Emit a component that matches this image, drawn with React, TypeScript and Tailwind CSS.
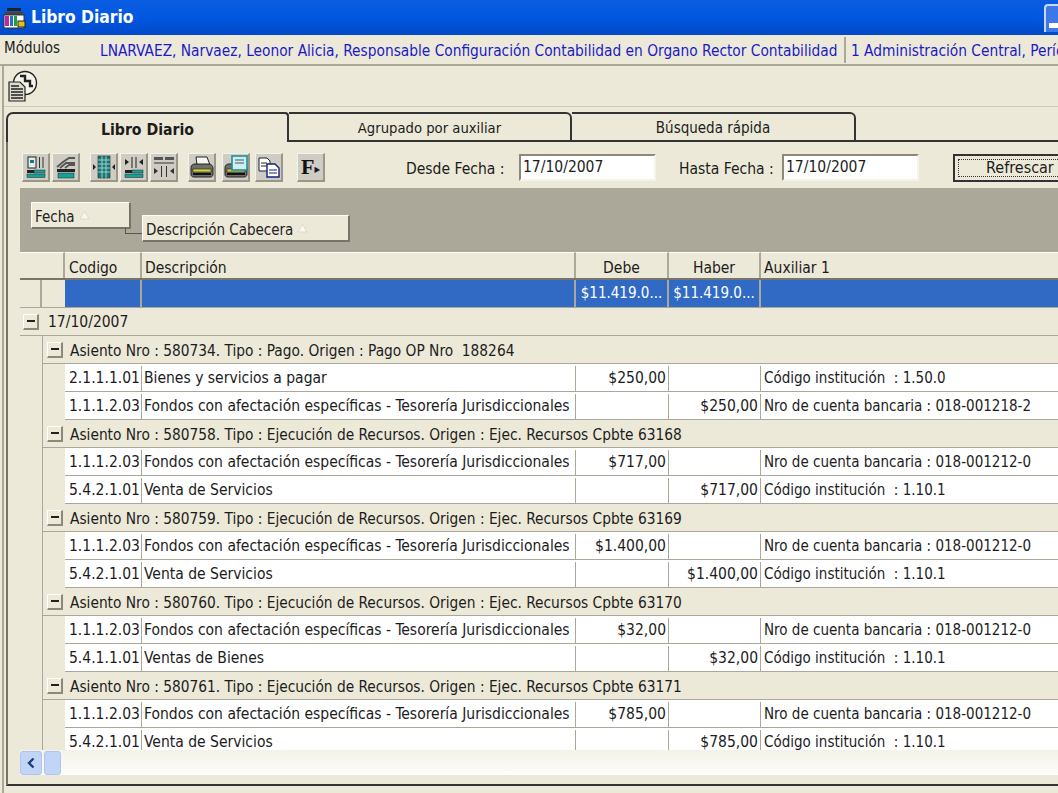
import { ReactNode } from 'react';

const FONT = { fontFamily: '"DejaVu Sans Condensed", "Liberation Sans", Arial, sans-serif' };

interface Row {
  code: string;
  desc: string;
  debe?: string;
  haber?: string;
  aux: string;
}

interface Asiento {
  title: string;
  rows: Row[];
}

const FONDOS = 'Fondos con afectación específicas - Tesorería Jurisdiccionales';
const CUENTA_0 = 'Nro de cuenta bancaria : 018-001212-0';
const INST_110 = 'Código institución  : 1.10.1';

const asientos: Asiento[] = [
  {
    title: 'Asiento Nro : 580734. Tipo : Pago. Origen : Pago OP Nro  188264',
    rows: [
      { code: '2.1.1.1.01', desc: 'Bienes y servicios a pagar', debe: '$250,00', aux: 'Código institución  : 1.50.0' },
      { code: '1.1.1.2.03', desc: FONDOS, haber: '$250,00', aux: 'Nro de cuenta bancaria : 018-001218-2' },
    ],
  },
  {
    title: 'Asiento Nro : 580758. Tipo : Ejecución de Recursos. Origen : Ejec. Recursos Cpbte 63168',
    rows: [
      { code: '1.1.1.2.03', desc: FONDOS, debe: '$717,00', aux: CUENTA_0 },
      { code: '5.4.2.1.01', desc: 'Venta de Servicios', haber: '$717,00', aux: INST_110 },
    ],
  },
  {
    title: 'Asiento Nro : 580759. Tipo : Ejecución de Recursos. Origen : Ejec. Recursos Cpbte 63169',
    rows: [
      { code: '1.1.1.2.03', desc: FONDOS, debe: '$1.400,00', aux: CUENTA_0 },
      { code: '5.4.2.1.01', desc: 'Venta de Servicios', haber: '$1.400,00', aux: INST_110 },
    ],
  },
  {
    title: 'Asiento Nro : 580760. Tipo : Ejecución de Recursos. Origen : Ejec. Recursos Cpbte 63170',
    rows: [
      { code: '1.1.1.2.03', desc: FONDOS, debe: '$32,00', aux: CUENTA_0 },
      { code: '5.4.1.1.01', desc: 'Ventas de Bienes', haber: '$32,00', aux: INST_110 },
    ],
  },
  {
    title: 'Asiento Nro : 580761. Tipo : Ejecución de Recursos. Origen : Ejec. Recursos Cpbte 63171',
    rows: [
      { code: '1.1.1.2.03', desc: FONDOS, debe: '$785,00', aux: CUENTA_0 },
      { code: '5.4.2.1.01', desc: 'Venta de Servicios', haber: '$785,00', aux: INST_110 },
    ],
  },
];

function ToolButton({ children, className = '' }: { children: ReactNode; className?: string }) {
  return (
    <div className={`w-[28px] h-[29px] shrink-0 flex items-center justify-center bg-[#cfccc4] border-t border-l border-t-[#f4f2ea] border-l-[#f4f2ea] border-r-2 border-b-2 border-r-[#9a9788] border-b-[#9a9788] ${className}`}>
      {children}
    </div>
  );
}

function Minus() {
  return (
    <div className="w-[16px] h-[16px] shrink-0 flex items-center justify-center bg-[#ece9d8] border-t border-l border-t-white border-l-white border-r-2 border-b-2 border-r-[#8c8979] border-b-[#8c8979]">
      <div className="w-[8px] h-[2px] bg-[#222]" />
    </div>
  );
}

function AppIcon() {
  return (
    <svg width="24" height="24" viewBox="0 0 24 24" className="shrink-0">
      <rect x="5" y="2" width="14" height="3" fill="#222" />
      <path d="M3 6h18v3H3z" fill="#444" />
      <rect x="2" y="9" width="20" height="13" fill="#fff" stroke="#333" />
      <rect x="3" y="10" width="4" height="10" fill="#c026a0" />
      <rect x="8" y="10" width="3" height="10" fill="#2070d0" />
      <rect x="12" y="10" width="3" height="10" fill="#20a040" />
      <rect x="16" y="15" width="7" height="6" fill="#e0c020" stroke="#222" />
    </svg>
  );
}

function ClockDocIcon() {
  return (
    <svg width="30" height="32" viewBox="0 0 30 32" fill="none" stroke="#222" className="shrink-0">
      <circle cx="17" cy="13" r="11.5" fill="#f6f4ea" strokeWidth="1.4" />
      <path d="M12 6h5v5h5v5h3" strokeWidth="2.4" />
      <path d="M1 12h11l5 5v14H1z" fill="#dedcd0" strokeWidth="1.2" />
      <path d="M3 16h8M3 19h12M3 22h12M3 25h12M3 28h12" strokeWidth="1.3" />
    </svg>
  );
}

function BarBase() {
  return (
    <>
      <rect x="1" y="14" width="7" height="3" fill="#222" />
      <rect x="8" y="14" width="11" height="3" fill="#18a098" stroke="#222" strokeWidth="0.5" />
      <rect x="1" y="18" width="18" height="3.5" fill="#18a098" stroke="#222" strokeWidth="0.5" />
    </>
  );
}

function IconDocBar() {
  return (
    <svg width="20" height="23" viewBox="0 0 20 23" className="shrink-0">
      <rect x="2" y="1" width="8" height="11" fill="#dfeee9" stroke="#222" />
      <rect x="4" y="4" width="4" height="3" fill="#18787c" />
      <path d="M13.5 1v11M17 1v11" stroke="#333" />
      <BarBase />
    </svg>
  );
}

function IconHatchBar() {
  return (
    <svg width="22" height="23" viewBox="0 0 22 23" className="shrink-0">
      <path d="M2 11l6-5 6-4h6M5 12l6-5h9M10 12l4-3h6" stroke="#555" strokeWidth="1.8" fill="none" />
      <rect x="2" y="13" width="18" height="3" fill="#222" />
      <rect x="3" y="17" width="16" height="5" fill="#18a098" stroke="#222" strokeWidth="0.5" />
    </svg>
  );
}

function IconGridArrows() {
  return (
    <svg width="24" height="24" viewBox="0 0 24 24" className="shrink-0">
      <rect x="6" y="1" width="12" height="22" fill="#167a78" stroke="#222" strokeWidth="0.6" />
      <path d="M6 5h12M6 9h12M6 13h12M6 17h12M10 1v22M14 1v22" stroke="#bfe0da" strokeWidth="0.8" />
      <path d="M1 9l3 3-3 3zM23 9l-3 3 3 3z" fill="#222" />
    </svg>
  );
}

function IconArrowsBar() {
  return (
    <svg width="20" height="23" viewBox="0 0 20 23" className="shrink-0">
      <path d="M8 1v11M12 1v11" stroke="#222" />
      <path d="M1 3l4 3-4 3zM19 3l-4 3 4 3z" fill="#222" />
      <BarBase />
    </svg>
  );
}

function IconColumns() {
  return (
    <svg width="22" height="22" viewBox="0 0 22 22" className="shrink-0">
      <rect x="1" y="1" width="9" height="3" fill="#555" />
      <rect x="12" y="1" width="9" height="3" fill="#555" />
      <path d="M1 7h20" stroke="#333" />
      <path d="M8.5 10v11M13.5 10v11" stroke="#333" />
      <path d="M1 12l4 3-4 3zM21 12l-4 3 4 3z" fill="#333" />
    </svg>
  );
}

function IconPrinter({ preview }: { preview?: boolean }) {
  return (
    <svg width="24" height="24" viewBox="0 0 24 24" className="shrink-0">
      {!preview && <path d="M6 2h11l3 8H7z" fill="#f4f4f0" stroke="#222" />}
      <path d="M1 13c0-3 2-4 4-4h14c2 0 4 2 4 4v6c0 2-1 3-3 3H4c-2 0-3-1-3-3z" fill="#6e6e6c" stroke="#222" />
      <rect x="3" y="14" width="18" height="3" fill="#d8d030" stroke="#222" strokeWidth="0.6" />
      <rect x="3" y="18" width="18" height="2" fill="#111" />
      {preview && (
        <>
          <rect x="8" y="1" width="15" height="14" fill="#cfeef0" stroke="#1c8fa0" strokeWidth="1.6" />
          <path d="M11 5h9M11 8h9" stroke="#456" />
        </>
      )}
    </svg>
  );
}

function IconCopy() {
  return (
    <svg width="24" height="24" viewBox="0 0 24 24" className="shrink-0">
      <path d="M2 3h8l3 3v10H2z" fill="#fff" stroke="#222" />
      <path d="M4 8h6M4 11h6" stroke="#222" />
      <path d="M10 9h8l4 4v9H10z" fill="#fff" stroke="#102080" strokeWidth="1.4" />
      <path d="M12 15h8M12 18h8" stroke="#102080" />
    </svg>
  );
}

function SortMark() {
  return (
    <svg width="11" height="10" viewBox="0 0 11 10" className="shrink-0 ml-[4px]" fill="#f8f6ee" stroke="#d6d3c4" strokeWidth="0.7">
      <path d="M5.5 1l4.5 8H1z" />
    </svg>
  );
}

function GroupChip({ label, className }: { label: string; className: string }) {
  return (
    <div className={`h-[27px] bg-[#ece9d8] border-t border-l border-t-white border-l-white border-r-2 border-b-2 border-r-[#77746a] border-b-[#77746a] flex items-center pl-[3px] text-[#222] whitespace-nowrap text-[15px] ${className}`}>
      <span className="mt-[4px]">{label}</span>
      <SortMark />
    </div>
  );
}

function HeaderCell({ label, width, left }: { label: string; width: string; left?: number }) {
  return (
    <div className={`${width} h-full shrink-0 flex items-center border-t border-t-white border-r-2 border-r-[#aca899] ${left === 4 ? 'pl-[4px]' : left === 3 ? 'pl-[3px]' : 'justify-center'}`}>
      <span className="mt-[6px]">{label}</span>
    </div>
  );
}

function DataRow({ row }: { row: Row }) {
  return (
    <div className="flex h-[28px] shrink-0 pt-[2px] bg-white border-b border-b-[#aca899]">
      <div className="w-[77px] shrink-0 pl-[4px] flex items-center border-r border-r-[#aca899]">{row.code}</div>
      <div className="w-[434px] shrink-0 pl-[2px] flex items-center border-r border-r-[#aca899] whitespace-nowrap overflow-hidden">{row.desc}</div>
      <div className="w-[93px] shrink-0 pr-[2px] flex items-center justify-end border-r border-r-[#aca899]">{row.debe}</div>
      <div className="w-[92px] shrink-0 pr-[2px] flex items-center justify-end border-r border-r-[#aca899]">{row.haber}</div>
      <div className="flex-1 pl-[3px] flex items-center whitespace-pre text-[15px]">{row.aux}</div>
    </div>
  );
}

export default function App() {
  return (
    <div className="w-[1058px] h-[793px] overflow-hidden flex flex-col bg-[#ece9d8] text-[15.5px] text-[#1c1c1c]" style={FONT}>
      {/* title bar */}
      <div className="h-[35px] shrink-0 flex items-center pl-[2px] gap-[5px] bg-gradient-to-b from-[#0a5ce0] via-[#0258e0] to-[#0048c8]">
        <AppIcon />
        <span className="text-white font-bold text-[17.3px]">Libro Diario</span>
        <div className="ml-auto w-[14px] h-[28px] bg-[#3c78e8] border-l-2 border-t-2 border-[#c8d8f8] rounded-tl-[4px] flex items-end">
          <div className="w-full h-[5px] mb-[4px] ml-[3px] bg-white" />
        </div>
      </div>

      {/* modules bar */}
      <div className="h-[31px] shrink-0 flex items-center whitespace-nowrap border-b-2 border-b-[#aca899] overflow-hidden">
        <span className="ml-[4px] w-[96px] shrink-0 -mt-[3px] text-[15px]">Módulos</span>
        <span className="text-[#1a1ac8] shrink-0 w-[744px] text-[15.3px] mt-[4px]">LNARVAEZ, Narvaez, Leonor Alicia, Responsable Configuración Contabilidad en Organo Rector Contabilidad</span>
        <div className="w-[2px] h-[26px] bg-[#aca899] shrink-0" />
        <span className="text-[#1a1ac8] ml-[5px] shrink-0 text-[15.3px] mt-[4px]">1 Administración Central, Período</span>
      </div>

      <div className="flex-1 min-h-0 flex flex-col ml-[2px] border-l-2 border-l-[#aca899]">
        {/* icon bar */}
        <div className="h-[41px] shrink-0 flex items-center pl-[4px] border-b border-b-[#cfccbc]">
          <ClockDocIcon />
        </div>

        {/* tabs */}
        <div className="flex-1 min-h-0 flex flex-col pl-[2px] pt-[5px] pb-[7px]">
          <div className="h-[30px] shrink-0 flex">
            <div className="w-[283px] h-[30px] -mb-px z-10 pt-[3px] flex items-center justify-center font-bold text-[15.7px] bg-[#ece9d8] border-l-2 border-t-2 border-r-2 border-[#333] rounded-tl-[7px] rounded-tr-[4px]">
              Libro Diario
            </div>
            <div className="w-[283px] h-[30px] pt-[3px] flex items-center justify-center text-[14.7px] border-t-2 border-r-2 border-b-2 border-[#333] rounded-tr-[6px]">
              Agrupado por auxiliar
            </div>
            <div className="w-[284px] h-[30px] pt-[3px] flex items-center justify-center text-[15px] border-t-2 border-r-2 border-b-2 border-[#333] rounded-tr-[6px]">
              Búsqueda rápida
            </div>
            <div className="flex-1 border-b-2 border-b-[#333]" />
          </div>

          <div className="flex-1 min-h-0 flex flex-col border-l-2 border-l-[#77746a] border-b-2 border-b-[#333] pl-[12px] pb-[9px]">
            {/* filter toolbar */}
            <div className="h-[46px] shrink-0 flex items-center pl-[2px] pt-[5px] whitespace-nowrap">
              <ToolButton><IconDocBar /></ToolButton>
              <ToolButton className="ml-[2px]"><IconHatchBar /></ToolButton>
              <ToolButton className="ml-[10px]"><IconGridArrows /></ToolButton>
              <ToolButton className="ml-[2px]"><IconArrowsBar /></ToolButton>
              <ToolButton className="ml-[2px]"><IconColumns /></ToolButton>
              <ToolButton className="ml-[10px]"><IconPrinter /></ToolButton>
              <ToolButton className="ml-[6px]"><IconPrinter preview /></ToolButton>
              <ToolButton className="ml-[5px]"><IconCopy /></ToolButton>
              <ToolButton className="ml-[14px]">
                <span className="text-[22px] font-bold text-[#111] leading-none" style={{ fontFamily: '"Liberation Serif", serif' }}>F</span>
                <span className="text-[8px] leading-none mt-[6px]">▶</span>
              </ToolButton>
              <span className="ml-[81px] w-[113px] shrink-0 mt-[5px]">Desde Fecha :</span>
              <div className="w-[137px] h-[27px] shrink-0 pl-[2px] flex items-center bg-white border-t-2 border-l-2 border-t-[#8c8979] border-l-[#8c8979] border-r-2 border-b-2 border-r-[#f6f4ea] border-b-[#f6f4ea]">17/10/2007</div>
              <span className="ml-[23px] w-[103px] shrink-0 mt-[5px]">Hasta Fecha :</span>
              <div className="w-[137px] h-[27px] shrink-0 pl-[2px] flex items-center bg-white border-t-2 border-l-2 border-t-[#8c8979] border-l-[#8c8979] border-r-2 border-b-2 border-r-[#f6f4ea] border-b-[#f6f4ea]">17/10/2007</div>
              <div className="ml-[34px] w-[120px] h-[28px] shrink-0 flex items-center border-2 border-[#333] p-[3px]">
                <div className="w-full h-full border border-dotted border-[#333] flex items-center pl-[27px] text-[16px]">Refrescar</div>
              </div>
            </div>

            {/* group-by band */}
            <div className="relative h-[64px] shrink-0 bg-[#aca899] pl-[11px] pt-[14px]">
              <GroupChip label="Fecha" className="w-[100px]" />
              <GroupChip label="Descripción Cabecera" className="w-[208px] ml-[111px] -mt-[14px]" />
              <div className="absolute left-[105px] top-[40px] w-[17px] h-[6px] border-l border-b border-[#555]" />
            </div>

            {/* grid */}
            <div className="flex-1 min-h-0 overflow-hidden">
              <div className="h-[28px] flex bg-[#ece9d8] border-b-2 border-b-[#77746a] whitespace-nowrap">
                <HeaderCell label="" width="w-[45px]" />
                <HeaderCell label="Codigo" width="w-[77px]" left={4} />
                <HeaderCell label="Descripción" width="w-[434px]" left={3} />
                <HeaderCell label="Debe" width="w-[93px]" />
                <HeaderCell label="Haber" width="w-[92px]" />
                <div className="flex-1 flex items-center pl-[3px] border-t border-t-white">
                  <span className="mt-[6px]">Auxiliar 1</span>
                </div>
              </div>
              <div className="h-[28px] flex border-b border-b-[#aca899] whitespace-nowrap text-[15px]">
                <div className="w-[22px] shrink-0 border-r-2 border-r-[#aca899]" />
                <div className="w-[23px] shrink-0" />
                <div className="w-[77px] shrink-0 bg-[#316ac5] border-r-2 border-r-[#aca899]" />
                <div className="w-[434px] shrink-0 bg-[#316ac5] border-r-2 border-r-[#aca899]" />
                <div className="w-[93px] shrink-0 bg-[#316ac5] text-white flex items-center justify-center border-r-2 border-r-[#aca899]">$11.419.0...</div>
                <div className="w-[92px] shrink-0 bg-[#316ac5] text-white flex items-center justify-center border-r-2 border-r-[#aca899]">$11.419.0...</div>
                <div className="flex-1 bg-[#316ac5]" />
              </div>
              <div className="h-[28px] flex items-center pl-[3px] gap-[9px] border-b border-b-[#aca899]">
                <Minus />
                <span className="mt-[2px]">17/10/2007</span>
              </div>
              <div className="flex">
                <div className="w-[22px] shrink-0" />
                <div className="flex-1 min-w-0 border-l border-l-[#aca899]">
                  {asientos.map(a => (
                    <div key={a.title}>
                      <div className="h-[28px] flex items-center pl-[4px] gap-[7px] whitespace-pre border-b border-b-[#aca899]">
                        <Minus />
                        <span className="mt-[3px] text-[15.3px]">{a.title}</span>
                      </div>
                      <div className="pl-[22px]">
                        {a.rows.map(r => <DataRow key={r.code + r.aux} row={r} />)}
                      </div>
                    </div>
                  ))}
                </div>
              </div>
            </div>

            {/* horizontal scrollbar */}
            <div className="h-[25px] shrink-0 flex items-center gap-[2px] bg-gradient-to-b from-[#f4f2e8] to-[#fdfdfa]">
              <div className="w-[22px] h-[24px] flex items-center justify-center rounded-[3px] bg-[#c3d5f7] border border-[#b0c4ee]">
                <svg width="10" height="12" viewBox="0 0 10 12" fill="none" stroke="#1c3c80" strokeWidth="2.4">
                  <path d="M7.5 1.5 3 6l4.5 4.5" />
                </svg>
              </div>
              <div className="w-[17px] h-[24px] rounded-[3px] bg-[#c3d5f7] border border-[#b0c4ee]" />
            </div>
          </div>
        </div>
      </div>
    </div>
  );
}
